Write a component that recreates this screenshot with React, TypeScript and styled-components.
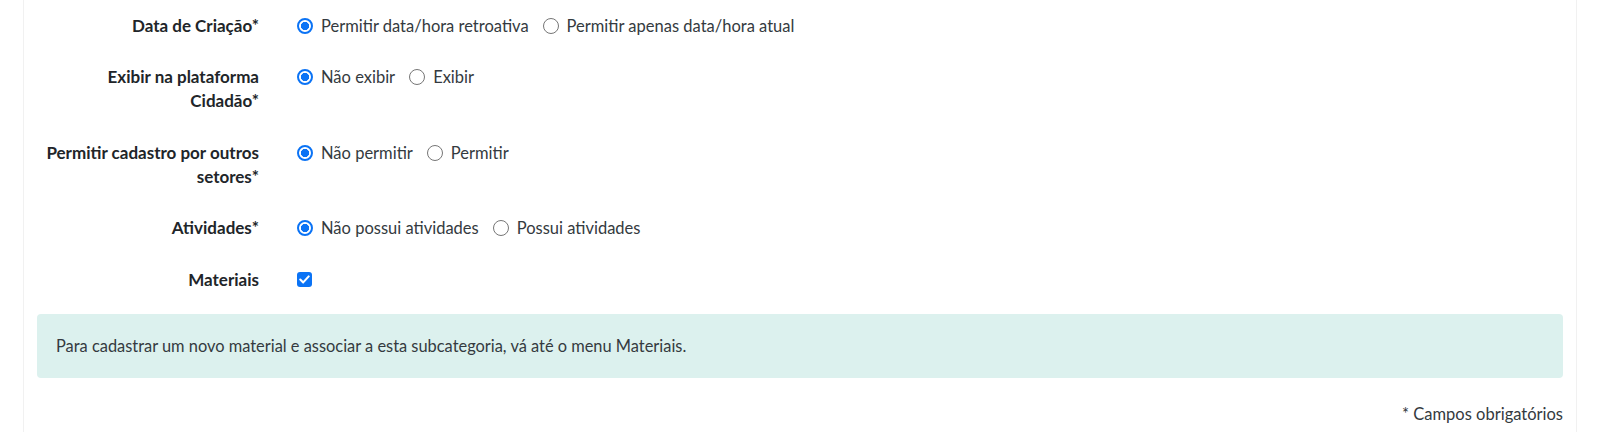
import React from "react";
import styled, { createGlobalStyle } from "styled-components";

interface Choice {
  label: string;
  checked?: boolean;
}

interface Field {
  label: string[];
  choices?: Choice[];
  checkbox?: boolean;
}

const fields: Field[] = [
  {
    label: ["Data de Criação*"],
    choices: [
      { label: "Permitir data/hora retroativa", checked: true },
      { label: "Permitir apenas data/hora atual" },
    ],
  },
  {
    label: ["Exibir na plataforma", "Cidadão*"],
    choices: [{ label: "Não exibir", checked: true }, { label: "Exibir" }],
  },
  {
    label: ["Permitir cadastro por outros", "setores*"],
    choices: [{ label: "Não permitir", checked: true }, { label: "Permitir" }],
  },
  {
    label: ["Atividades*"],
    choices: [
      { label: "Não possui atividades", checked: true },
      { label: "Possui atividades" },
    ],
  },
  { label: ["Materiais"], checkbox: true },
];

const App = () => {
  return (
    <>
      <GlobalStyle />
      <Card>
        {fields.map((field) => (
          <FormRow key={field.label.join(" ")}>
            <Label>
              {field.label.map((line) => (
                <span key={line}>{line}</span>
              ))}
            </Label>
            <Controls>
              {field.choices &&
                field.choices.map((choice) => (
                  <Option key={choice.label}>
                    <Radio $checked={!!choice.checked} />
                    <OptionText>{choice.label}</OptionText>
                  </Option>
                ))}
              {field.checkbox && (
                <Checkbox>
                  <svg width="11" height="9" viewBox="0 0 11 9">
                    <path
                      d="M1.3 4.6 L4.2 7.4 L9.7 1.4"
                      fill="none"
                      stroke="#fff"
                      strokeWidth="2.1"
                      strokeLinecap="round"
                      strokeLinejoin="round"
                    />
                  </svg>
                </Checkbox>
              )}
            </Controls>
          </FormRow>
        ))}
        <Alert>
          Para cadastrar um novo material e associar a esta subcategoria, vá até o menu Materiais.
        </Alert>
        <Footer>* Campos obrigatórios</Footer>
      </Card>
    </>
  );
};

export default App;

const GlobalStyle = createGlobalStyle`
  body {
    margin: 0;
    background: #fff;
    font-family: "Lato", "Liberation Sans", sans-serif;
    font-size: 16.5px;
    line-height: 24px;
    color: #212529;
  }
`;

const Card = styled.div`
  margin-left: 23px;
  width: 1554px;
  height: 432px;
  box-sizing: border-box;
  border-left: 1px solid #f1f1f1;
  border-right: 1px solid #f1f1f1;
  padding: 13.5px 13px 0 13px;
`;

const FormRow = styled.div`
  display: grid;
  grid-template-columns: 222px 1fr;
  column-gap: 38px;
  margin-bottom: 27.5px;
`;

const Label = styled.div`
  display: flex;
  flex-direction: column;
  align-items: flex-end;
  text-align: right;
  font-size: 17px;
  font-weight: 700;
  color: #212529;
`;

const Controls = styled.div`
  display: flex;
  align-items: center;
  gap: 14px;
  height: 24px;
`;

const Option = styled.div`
  display: flex;
  align-items: center;
  gap: 8px;
`;

const Radio = styled.span<{ $checked: boolean }>`
  width: 16px;
  height: 16px;
  box-sizing: border-box;
  border-radius: 50%;
  border: ${(p) => (p.$checked ? "2px solid #0b73f5" : "1px solid #767676")};
  background: ${(p) =>
    p.$checked ? "radial-gradient(circle, #0b73f5 0 3.8px, #fff 4.4px)" : "#fff"};
  flex-shrink: 0;
`;

const OptionText = styled.span`
  color: #343a40;
  white-space: nowrap;
`;

const Checkbox = styled.span`
  width: 15px;
  height: 15px;
  border-radius: 3px;
  background: #0b73f5;
  display: flex;
  align-items: center;
  justify-content: center;
`;

const Alert = styled.div`
  margin-top: -5.5px;
  padding: 20px 19px;
  background: #dcf1ee;
  border-radius: 4px;
  font-size: 16.4px;
  color: #343a40;
`;

const Footer = styled.div`
  margin-top: 24px;
  text-align: right;
  color: #343a40;
`;
